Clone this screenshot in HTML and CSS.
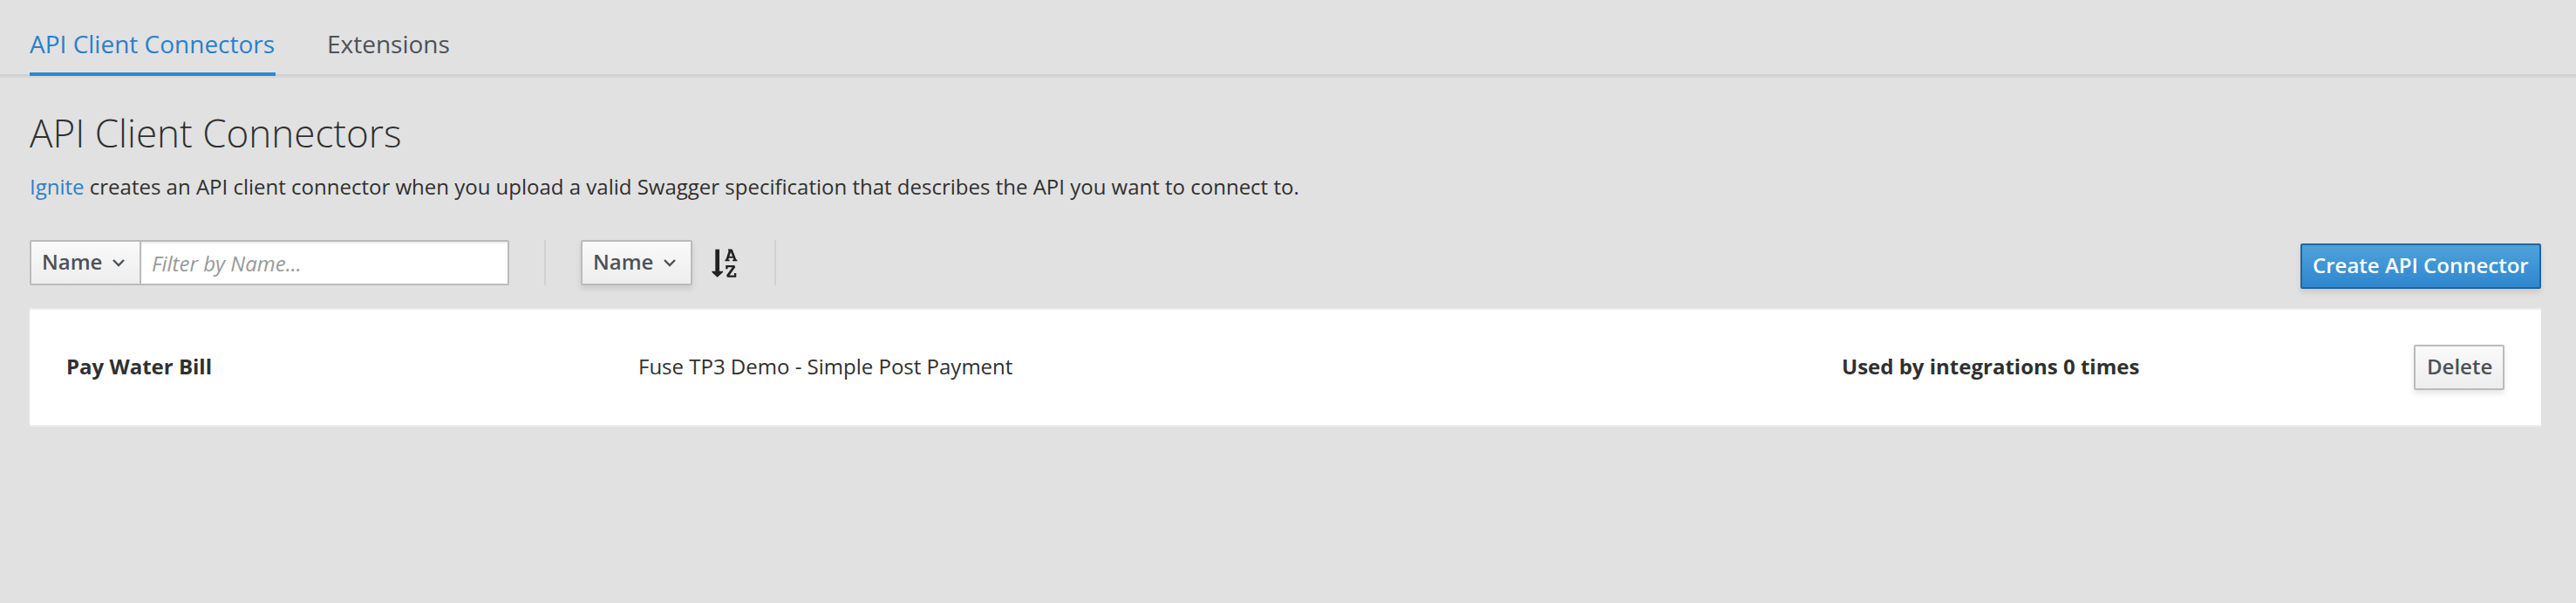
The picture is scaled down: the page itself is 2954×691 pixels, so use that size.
FILE: index.html
```html
<!DOCTYPE html>
<html lang="en">
<head>
<meta charset="utf-8">
<title>API Client Connectors</title>
<link rel="stylesheet" href="styles.css">
</head>
<body>
<nav class="tabs">
  <a class="tab active">API Client Connectors</a>
  <a class="tab">Extensions</a>
</nav>
<main class="page">
  <h1 class="title">API Client Connectors</h1>
  <p class="intro"><a class="link">Ignite</a> creates an API client connector when you upload a valid Swagger specification that describes the API you want to connect to.</p>
  <div class="toolbar">
    <div class="filter">
      <button class="btn btn-filter">Name<svg class="caret" viewBox="0 0 14 9"><path d="M1 1l6 6 6-6"/></svg></button>
      <input class="filter-input" type="text" placeholder="Filter by Name...">
    </div>
    <div class="sort">
      <button class="btn btn-sort">Name<svg class="caret" viewBox="0 0 14 9"><path d="M1 1l6 6 6-6"/></svg></button>
      <svg class="sort-icon" viewBox="0 0 30 33">
        <path d="M4.3 .8h4.700v25h4v1.3L6.600 32.700L.4 27.100v-1.3h3.900z" fill="#222"/>
        <g fill="none" stroke="#222">
          <path d="M15.400 13.300h5.200M24.200 13.300h5.200M19 1.500h4.300" stroke-width="1.800"/>
          <path d="M17.500 13.300L21.400 1.500M22.600 1.500l4.500 11.800" stroke-width="2.700"/>
          <path d="M18.800 9.700h6.600" stroke-width="1.900"/>
          <path d="M17.400 23.300v-3.200h9.100M17.800 31.700h9.300v-3.700" stroke-width="2.300"/>
          <path d="M26.200 20.300L18 31.600" stroke-width="2.800"/>
        </g>
      </svg>
    </div>
    <button class="btn btn-primary">Create API Connector</button>
  </div>
  <div class="list">
    <div class="row">
      <strong class="name">Pay Water Bill</strong>
      <span class="description">Fuse TP3 Demo - Simple Post Payment</span>
      <strong class="usage">Used by integrations 0 times</strong>
      <button class="btn btn-delete">Delete</button>
    </div>
  </div>
</main>
</body>
</html>
```
FILE: styles.css
```css
* { box-sizing: border-box; }
body {
  margin: 0;
  min-height: 691px;
  background: #e1e1e1;
  color: #303030;
  font: 24px/40px "Open Sans", "Noto Sans", sans-serif;
}
.tabs {
  display: flex;
  gap: 59px;
  height: 89px;
  padding-left: 34px;
  border-bottom: 2px solid #d6d6d6;
  box-shadow: inset 0 -2px #d1d1d1;
}
.tab {
  height: 87px;
  padding-top: 26px;
  font-size: 28px;
  line-height: 48px;
  color: #4d5258;
  white-space: nowrap;
}
.tab.active {
  width: 282px;
  color: #2a80cc;
  border-bottom: 4px solid #2f88d0;
}
.page { padding: 0 40px 0 34px; }
.title {
  margin: 38px 0 0;
  font-size: 44px;
  line-height: 50px;
  font-weight: 300;
}
.intro { margin: 17px 0 0; }
.link { color: #2a80cc; }
.toolbar {
  display: flex;
  align-items: flex-start;
  height: 78px;
  margin-top: 41px;
}
.btn {
  display: flex;
  align-items: center;
  height: 52px;
  padding: 0 0 2px 12px;
  border: 2px solid #bbb;
  border-radius: 2px;
  background: linear-gradient(#fafafa, #ededed);
  box-shadow: 0 4px 6px rgba(3, 3, 3, .1);
  color: #4d5258;
  font: 600 24px/40px "Open Sans", "Noto Sans", sans-serif;
  white-space: nowrap;
}
.caret {
  width: 14px;
  height: 9px;
  margin: 2px 0 0 12px;
  fill: none;
  stroke: #4d5258;
  stroke-width: 2.4;
}
.filter {
  display: flex;
  width: 592px;
  height: 52px;
  padding-right: 40px;
  border-right: 2px solid #d1d1d1;
}
.btn-filter {
  width: 128px;
  border-radius: 2px 0 0 2px;
  box-shadow: none;
}
.filter-input {
  width: 424px;
  height: 52px;
  margin-left: -2px;
  padding: 0 12px;
  border: 2px solid #bbb;
  border-radius: 0 2px 2px 0;
  background: #fff;
  box-shadow: inset 0 2px 2px rgba(3, 3, 3, .075);
  font: 24px/40px "Open Sans", "Noto Sans", sans-serif;
}
.filter-input::placeholder { color: #999; font-style: italic; }
.sort {
  display: flex;
  height: 52px;
  width: 264px;
  padding-left: 40px;
  border-right: 2px solid #d1d1d1;
}
.btn-sort { width: 128px; }
.sort-icon { width: 30px; height: 33px; margin: 10px 0 0 22px; }
.btn-primary {
  width: 276px;
  margin: 4px 0 0 auto;
  border-color: #21649c;
  background: linear-gradient(#4fa2da, #2f86cd);
  color: #fff;
}
.list {
  height: 136px;
  border-top: 2px solid #ededed;
  border-bottom: 2px solid #ededed;
  background: #fff;
}
.row {
  display: grid;
  grid-template-columns: 656px 1380px 1fr 104px;
  align-items: start;
  padding: 40px 42px 0;
}
.row > * { line-height: 52px; }
.name, .usage, .description { margin-top: -1px; }
.btn-delete { padding-left: 13px; }
```
